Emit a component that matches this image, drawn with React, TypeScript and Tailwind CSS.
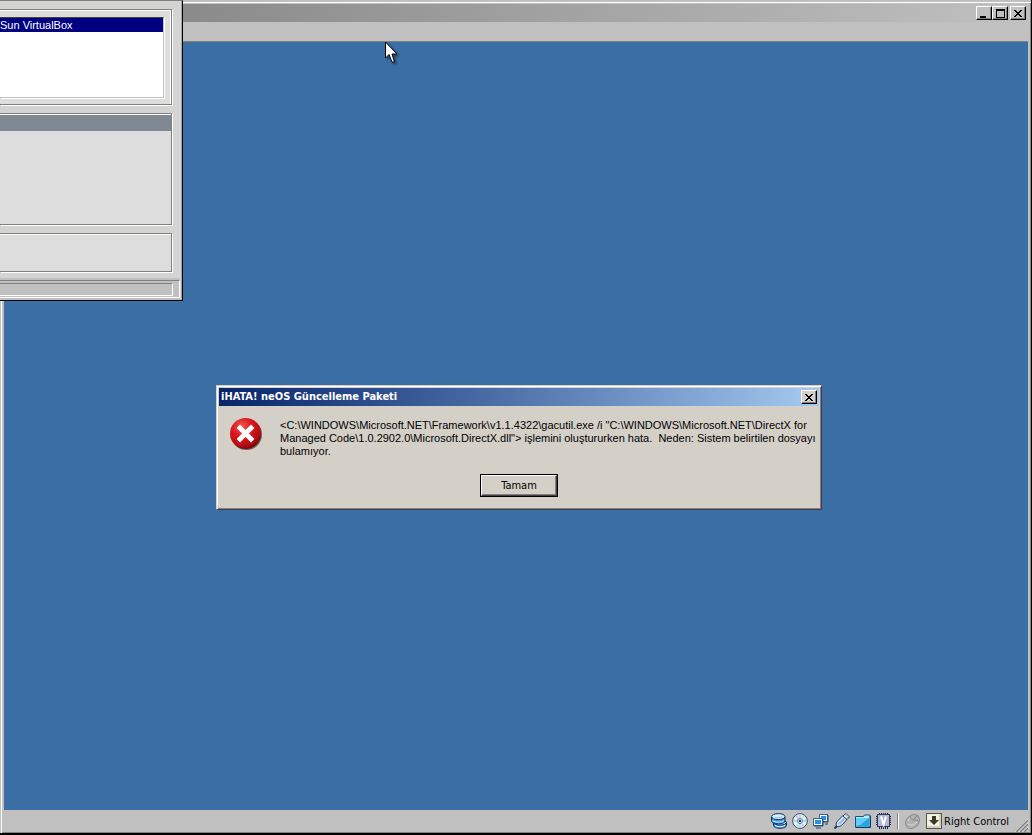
import type { ReactNode } from "react";

const raised =
  "border border-t-white border-l-white border-r-black border-b-black shadow-[inset_-1px_-1px_0_#808080]";

function CaptionButton({ label, className = "", children }: { label: string; className?: string; children: ReactNode }) {
  return (
    <button
      type="button"
      aria-label={label}
      className={`flex h-[14px] w-4 shrink-0 items-center justify-center ${raised} ${className}`}
    >
      {children}
    </button>
  );
}

function CrossGlyph() {
  return (
    <svg width="8" height="7" viewBox="0 0 8 7" shapeRendering="crispEdges">
      <path
        fill="#000"
        d="M0 0h2v1h-2zM6 0h2v1h-2zM1 1h2v1h-2zM5 1h2v1h-2zM2 2h4v1h-4zM3 3h2v1h-2zM2 4h4v1h-4zM1 5h2v1h-2zM5 5h2v1h-2zM0 6h2v1h-2zM6 6h2v1h-2z"
      />
    </svg>
  );
}

function ErrorIcon() {
  return (
    <svg width="34" height="34" viewBox="0 0 34 34" className="shrink-0">
      <defs>
        <radialGradient id="errorBall" cx="38%" cy="28%" r="75%">
          <stop offset="0" stopColor="#ee5a54" />
          <stop offset="0.4" stopColor="#dc1c20" />
          <stop offset="0.8" stopColor="#b80c12" />
          <stop offset="1" stopColor="#6d0507" />
        </radialGradient>
      </defs>
      <circle cx="17.5" cy="16.5" r="15.5" fill="#3b2020" opacity="0.65" />
      <circle cx="16.5" cy="15.5" r="15.5" fill="url(#errorBall)" />
      <path d="M11 10l11 11M22 10L11 21" stroke="#fff" strokeWidth="4.800" strokeLinecap="square" />
    </svg>
  );
}

function DiskIcon() {
  return (
    <svg width="16" height="16" viewBox="0 0 16 16" stroke="#10304f">
      <path d="M2.500 9v3.500c0 1.600 3 2.800 6.500 2.800s6.500-1.200 6.500-2.800V9" fill="#3c9cf0" />
      <ellipse cx="9" cy="9.500" rx="6.500" ry="2.500" fill="#cfeaff" />
      <path d="M4 12.500c2 1.500 7 1.700 10 0" fill="none" stroke="#e3f4ff" />
      <path d="M.5 4v4c0 1.600 3 2.800 7 2.800s6.500-1.200 6.500-2.800V4" fill="#3c9cf0" />
      <path d="M1.500 7.500c2 2.200 9 2.300 11.500.2" fill="none" stroke="#e3f4ff" />
      <ellipse cx="7.300" cy="3.600" rx="6.700" ry="3" fill="#d5edff" />
      <path d="M4 4c2 1 5 1 7-.3" fill="none" stroke="#7ebdf0" />
    </svg>
  );
}

function DiscIcon() {
  return (
    <svg width="16" height="16" viewBox="0 0 16 16">
      <circle cx="8" cy="8" r="7.300" fill="#eef7ff" stroke="#28425c" />
      <path d="M8 8L5 1.500h5zM8 8l-3 6.500h5z" fill="#c2dcf2" />
      <path d="M8 8L1.500 6v4zM8 8l6.500-2v4z" fill="#a8d9f5" />
      <path d="M8 8L3 3l2-1zM8 8l5 5-2 1z" fill="#d4b7e7" />
      <path d="M8 8l5-5-2-1zM8 8l-5 5 2 1z" fill="#bfe7c5" />
      <circle cx="8" cy="8" r="2.500" fill="#fff" stroke="#55789a" />
      <circle cx="8" cy="8" r="1.200" fill="#14314f" />
    </svg>
  );
}

function NetworkIcon() {
  return (
    <svg width="16" height="16" viewBox="0 0 16 16">
      <rect x="6.500" y="1.500" width="8" height="7" fill="#f4faff" stroke="#3e648c" />
      <rect x="8" y="3" width="5" height="4" fill="#2790ee" />
      <path d="M15 2v7h-5M12 11h3" fill="none" stroke="#174874" />
      <rect x=".5" y="5.500" width="9" height="7" fill="#f4faff" stroke="#3e648c" />
      <rect x="2" y="7" width="6" height="4" fill="#2790ee" />
      <path d="M1 13h9V7M3 15h5" fill="none" stroke="#174874" />
    </svg>
  );
}

function UsbIcon() {
  return (
    <svg width="16" height="16" viewBox="0 0 16 16" strokeLinejoin="round">
      <path d="M.5 15.500l3-3" stroke="#1e3a5d" strokeWidth="2" />
      <path d="M2.500 13c-1-2 0-4 2-6l4.500-4.500L13 6.500 9 11c-2 2-4.500 3.500-6.500 2z" fill="#cfe0f8" stroke="#243a5c" />
      <path d="M9 3l3-2.500L15.500 4 13 6.500z" fill="#fff" stroke="#243a5c" />
      <path d="M5 11l5.500-5.500" stroke="#9db8df" strokeWidth="2" />
      <path d="M12 2.500l1 1M13.500 4l.5.5" stroke="#243a5c" />
    </svg>
  );
}

function FolderIcon() {
  return (
    <svg width="16" height="16" viewBox="0 0 16 16">
      <path d="M.5 14V3.500h8l1-1.500h5.500v12z" fill="#b9e9fc" stroke="#0f547d" />
      <path d="M1 5h13v8.500H1z" fill="#22a6e8" />
      <path d="M1 5h13L5 12l-4 1z" fill="#62cdf7" />
      <path d="M.5 14.500h15V3" fill="none" stroke="#063b5b" />
    </svg>
  );
}

function ChipIcon() {
  return (
    <svg width="16" height="16" viewBox="0 0 16 16">
      <path
        d="M3.500 0v16M5.500 0v16M7.500 0v16M9.500 0v16M11.500 0v16M0 3.500h15M0 5.500h15M0 7.500h15M0 9.500h15M0 11.500h15"
        stroke="#20243f"
      />
      <rect x="1.500" y="1.500" width="12" height="12" fill="#b4b8d6" stroke="#34395f" />
      <path d="M5 3.500l2.500 8 2.500-8" fill="none" stroke="#fff" strokeWidth="2" />
    </svg>
  );
}

function MouseIcon() {
  return (
    <svg width="16" height="16" viewBox="0 0 16 16">
      <ellipse cx="7.500" cy="8.500" rx="7.800" ry="6" transform="rotate(-45 7.500 8.500)" fill="#b2b2b2" stroke="#8a8a8a" />
      <path d="M5 3c0 3 3 5 8 4M9 6l4-4" fill="none" stroke="#858585" />
      <path d="M3 11c3 2 6 1 9-2M3 8l2-3" fill="none" stroke="#dadada" />
    </svg>
  );
}

function HostKeyIcon() {
  return (
    <svg width="16" height="16" viewBox="0 0 16 16">
      <rect x=".5" y=".5" width="15" height="15" fill="#f0f0df" stroke="#55554c" />
      <path d="M14 1v13H1" fill="none" stroke="#b0b0a2" />
      <path d="M6 3h4v4h3l-5 5-5-5h3z" fill="#38382f" />
    </svg>
  );
}

function Pointer() {
  return (
    <svg
      width="16"
      height="24"
      viewBox="0 0 16 24"
      className="absolute left-[385px] top-[41px] drop-shadow-[2px_2px_1px_rgba(0,0,0,0.4)]"
    >
      <path d="M.5 1v16l3.500-3.500 3 7.500h2.500l-2.500-8h5z" fill="#fff" stroke="#000" />
    </svg>
  );
}

function ManagerWindow() {
  return (
    <section
      aria-label="VirtualBox"
      className="absolute left-0 top-0 w-[183px] border-t border-r border-b border-t-[#808080] border-r-black border-b-black bg-[#d4d4d2] shadow-[inset_-1px_-1px_0_#a8a8a8]"
    >
      <div className="flex flex-col gap-2 pt-2 pr-[10px] pb-[6px]">
        <div className="border-y border-r border-[#808080] bg-[#ddd] pt-[7px] pr-[7px] pb-[6px] shadow-[1px_1px_0_#fff,inset_-1px_1px_0_#fff]">
          <ul className="h-[81px] border-t border-r border-b border-t-[#404040] border-r-[#c0c0c0] border-b-[#c0c0c0] bg-white shadow-[1px_1px_0_#fff]">
            <li className="h-[14px] bg-[#000080] font-['Liberation_Sans',sans-serif] text-[11px] leading-[15px] whitespace-nowrap text-white">
              Sun VirtualBox
            </li>
          </ul>
        </div>
        <div className="h-28 border-y border-r border-[#808080] bg-[#ddd] pt-px shadow-[1px_1px_0_#fff,inset_0_1px_0_#fff]">
          <div className="h-4 bg-[#808893]" />
        </div>
        <div className="h-[39px] border-y border-r border-[#808080] bg-[#ddd] shadow-[1px_1px_0_#fff,inset_0_1px_0_#fff]" />
      </div>
      <div className="mr-[2px] border-t-2 border-[#c0c0c0] bg-[#c0c0c0] pb-[2px]">
        <div className="border-t border-r border-b border-t-[#808080] border-r-white border-b-white pt-[2px] pr-[6px] pb-px">
          <div className="h-[13px] border-t border-r border-b border-t-[#808080] border-r-white border-b-white" />
        </div>
      </div>
    </section>
  );
}

function ErrorDialog() {
  return (
    <section
      role="alertdialog"
      aria-labelledby="dialog-title"
      aria-describedby="dialog-text"
      className="absolute left-[216px] top-[385px] w-[606px] border border-t-[#d4d0c8] border-l-[#d4d0c8] border-r-[#404040] border-b-[#404040] bg-[#d4d0c8] p-[2px] pb-3 shadow-[inset_1px_1px_0_#fff,inset_-1px_-1px_0_#808080]"
    >
      <header className="flex h-[18px] items-center justify-between bg-linear-to-r from-[#0a246a] to-[#a6caf0] pr-[2px] pl-[2px]">
        <h1 id="dialog-title" className="text-[11px] leading-[18px] font-bold text-white">
          iHATA! neOS Güncelleme Paketi
        </h1>
        <CaptionButton label="Kapat" className="bg-[#d4d0c8]">
          <CrossGlyph />
        </CaptionButton>
      </header>
      <div className="flex gap-[17px] pt-3 pl-[10px]">
        <ErrorIcon />
        <p
          id="dialog-text"
          className="pt-px font-['Liberation_Sans',sans-serif] text-[11px] leading-[13px] whitespace-pre text-black"
        >
          {'<C:\\WINDOWS\\Microsoft.NET\\Framework\\v1.1.4322\\gacutil.exe /i "C:\\WINDOWS\\Microsoft.NET\\DirectX for\n'}
          {'Managed Code\\1.0.2902.0\\Microsoft.DirectX.dll"> işlemini oluştururken hata.  Neden: Sistem belirtilen dosyayı\n'}
          bulamıyor.
        </p>
      </div>
      <div className="mt-4 flex justify-center">
        <button type="button" className="h-[23px] w-[78px] border border-black text-[11px] leading-[13px] text-black">
          <span className="flex h-full items-center justify-center border border-t-white border-l-white border-r-[#404040] border-b-[#404040] shadow-[inset_-1px_-1px_0_#808080]">
            Tamam
          </span>
        </button>
      </div>
    </section>
  );
}

export default function App() {
  return (
    <div className="relative flex h-screen flex-col overflow-hidden border-r border-b-2 border-black bg-[#c0c0c0] pt-[2px] font-['DejaVu_Sans_Condensed','Noto_Sans',sans-serif] text-black">
      <div className="ml-px flex flex-1 flex-col border-t border-l border-t-white border-l-white pt-px pr-[3px] pl-[2px] shadow-[inset_-1px_-1px_0_#808080]">
        <header className="flex h-[18px] items-center justify-end bg-linear-to-r from-[#808080] to-[#c0c0c0] pr-[2px]">
          <CaptionButton label="Minimize" className="bg-[#c0c0c0]">
            <span className="mt-[7px] mr-[2px] h-[2px] w-[6px] bg-black" />
          </CaptionButton>
          <CaptionButton label="Maximize" className="bg-[#c0c0c0]">
            <span className="h-[9px] w-[9px] border border-t-2 border-black" />
          </CaptionButton>
          <CaptionButton label="Close" className="ml-[2px] bg-[#c0c0c0]">
            <CrossGlyph />
          </CaptionButton>
        </header>
        <div className="h-[19px]" />
        <main className="flex-1 border-t border-[#808080] bg-[#3a6ea5]" />
        <footer className="flex h-[23px] items-center justify-end gap-[5px] pb-px text-[11px] leading-[13px]">
          <DiskIcon />
          <DiscIcon />
          <NetworkIcon />
          <UsbIcon />
          <FolderIcon />
          <ChipIcon />
          <span className="mr-px h-4 w-[2px] border-l border-l-[#808080] border-r border-r-white" />
          <MouseIcon />
          <HostKeyIcon />
          <span className="-ml-[3px]">Right Control</span>
          <svg width="14" height="14" viewBox="0 0 14 14" className="self-end">
            <path d="M1 14L14 1M5 14l9-9M9 14l5-5" stroke="#fff" />
            <path d="M2 14L14 2M6 14l8-8M10 14l4-4" stroke="#808080" strokeWidth="1.500" />
          </svg>
        </footer>
      </div>
      <ManagerWindow />
      <ErrorDialog />
      <Pointer />
    </div>
  );
}
